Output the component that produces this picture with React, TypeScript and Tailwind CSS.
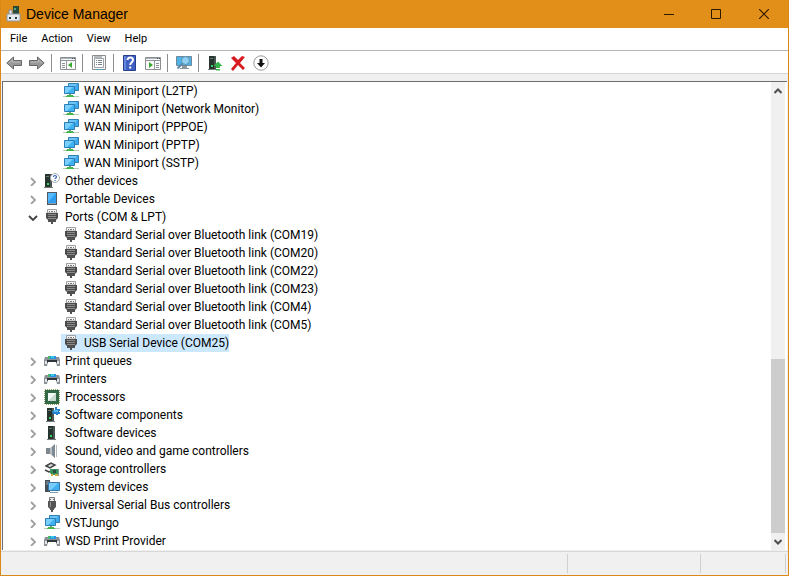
import React, { useState } from "react";

type IconName =
  | "network" | "unknown" | "portable" | "port" | "printer" | "cpu"
  | "component" | "software" | "sound" | "storage" | "system" | "usb";

interface Device {
  name: string;
  icon: IconName;
}

interface Category extends Device {
  open?: boolean;
  children?: Device[];
}

const adapters: Device[] = [
  { name: "WAN Miniport (L2TP)", icon: "network" },
  { name: "WAN Miniport (Network Monitor)", icon: "network" },
  { name: "WAN Miniport (PPPOE)", icon: "network" },
  { name: "WAN Miniport (PPTP)", icon: "network" },
  { name: "WAN Miniport (SSTP)", icon: "network" },
];

const categories: Category[] = [
  { name: "Other devices", icon: "unknown" },
  { name: "Portable Devices", icon: "portable" },
  {
    name: "Ports (COM & LPT)",
    icon: "port",
    open: true,
    children: [
      { name: "Standard Serial over Bluetooth link (COM19)", icon: "port" },
      { name: "Standard Serial over Bluetooth link (COM20)", icon: "port" },
      { name: "Standard Serial over Bluetooth link (COM22)", icon: "port" },
      { name: "Standard Serial over Bluetooth link (COM23)", icon: "port" },
      { name: "Standard Serial over Bluetooth link (COM4)", icon: "port" },
      { name: "Standard Serial over Bluetooth link (COM5)", icon: "port" },
      { name: "USB Serial Device (COM25)", icon: "port" },
    ],
  },
  { name: "Print queues", icon: "printer" },
  { name: "Printers", icon: "printer" },
  { name: "Processors", icon: "cpu" },
  { name: "Software components", icon: "component" },
  { name: "Software devices", icon: "software" },
  { name: "Sound, video and game controllers", icon: "sound" },
  { name: "Storage controllers", icon: "storage" },
  { name: "System devices", icon: "system" },
  { name: "Universal Serial Bus controllers", icon: "usb" },
  { name: "VSTJungo", icon: "network" },
  { name: "WSD Print Provider", icon: "printer" },
];

function Tower({ x = 0 }: { x?: number }) {
  return (
    <g transform={`translate(${x} 0)`}>
      <path d="M1 1h6v13H1z" fill="#26342f" />
      <path d="M6 1h2v13H6z" fill="#4b5652" />
      <path d="M2 3.500h3" stroke="#6b7a72" />
      <path d="M3 10h2v2H3z" fill="#37d565" />
      <path d="M0 14h9v1H0z" fill="#777" />
    </g>
  );
}

const drawings: Record<IconName, React.ReactNode> = {
  network: (
    <>
      <path d="M5.500.5h10v7h-10z" fill="#3fa9ea" stroke="#2f80b5" />
      <path d="M6 1h8l-2 3H6z" fill="#6cc6f8" />
      <path d="M1.500 3.500h10v7h-10z" fill="#3fb2f2" stroke="#2a7db5" />
      <path d="M2 4h8l-6 6H2z" fill="#7bcffc" />
      <path d="M0 13h16v1H0z" fill="#b9cdb9" />
      <path d="M6 11h2v1H6z" fill="#7d9c80" />
      <path d="M4 12h6v1H4zM3 13h8v1H3z" fill="#43b64b" />
    </>
  ),
  unknown: (
    <>
      <Tower />
      <circle cx="11" cy="5" r="4.500" fill="#fff" stroke="#a8adb5" />
      <path d="M9.500 4c0-2 3-2 3 0 0 1-1.500 1-1.500 2M11 7v1" fill="none" stroke="#315fb0" strokeWidth="1.200" />
    </>
  ),
  portable: (
    <>
      <path d="M3 1h10v13H3z" fill="#4d5a66" />
      <path d="M4 2h8v10H4z" fill="#2d9df0" />
      <path d="M4 2h8l-8 9z" fill="#58b9fb" />
      <path d="M4 12h8v1H4z" fill="#8ca0af" />
    </>
  ),
  port: (
    <>
      <path d="M3.500.5h9V4h-9z" fill="#f4f4f4" stroke="#a0a0a0" />
      <path d="M5 2h1v1H5zM7 2h2v1H7zM10 2h1v1h-1z" fill="#777" />
      <path d="M2 4h12v5l-2 2H4L2 9z" fill="#4b4b4b" />
      <path d="M4 5.500h8M4 7.500h8M4 9.500h8" stroke="#8a8a8a" />
      <path d="M4 11h3v2H4zM7 11h2v4H7zM9 11h3v2H9z" fill="#505050" />
    </>
  ),
  printer: (
    <>
      <path d="M4 3h8v4H4z" fill="#2f8fe0" />
      <path d="M4 3h2v3H4z" fill="#49b96a" />
      <path d="M7 3h3v2H7z" fill="#35cfe0" />
      <path d="M1 4h3v2h8V4h3l1 3v6H0V7z" fill="#8b9196" />
      <path d="M1 8h2v3H1zM13 8h2v3h-2z" fill="#e4e7e9" />
      <path d="M3 7h10v3H3z" fill="#30363b" />
      <path d="M4 9h8l1 4H3z" fill="#fff" />
    </>
  ),
  cpu: (
    <>
      <path d="M1 1h14v14H1z" fill="none" stroke="#8ba45a" strokeWidth="2" strokeDasharray="1 1" />
      <path d="M1 1h14v14H1z" fill="#326747" />
      <path d="M4 4h8v8H4z" fill="#c9dccf" />
      <path d="M4 4h8l-8 8z" fill="#f4faf6" />
    </>
  ),
  component: (
    <>
      <Tower x={2} />
      <path d="M9 3h2V0h2v2h3v2h-1v1h1v2h-2v1h-2V7H9V6H8V4h1z" fill="#2482cc" />
      <path d="M10 3h4v2h-4z" fill="#5db6ed" />
    </>
  ),
  software: <Tower x={3} />,
  sound: (
    <>
      <path d="M2 5h4v6H2z" fill="#7d878e" />
      <path d="M6 5l5-4v14l-5-4z" fill="#b6bec4" />
      <path d="M8 4l3-3v14l-3-3z" fill="#7e8a93" />
      <path d="M12.500 2v12" stroke="#b4bbc0" />
    </>
  ),
  storage: (
    <>
      <path d="M2 5l5-3 4 2-5 3zM1 9l4 2 3-1" fill="#ddd" stroke="#444" strokeWidth="1.500" />
      <path d="M6 8h9v6H8l-2-2z" fill="#35945b" />
      <path d="M9 9h3v3H9z" fill="#294c47" />
      <path d="M7 13h2v2H7zM11 13h3v2h-3z" fill="#d2ac3f" />
      <path d="M14 8h1v7h-1z" fill="#7d9aa1" />
    </>
  ),
  system: (
    <>
      <path d="M1 1h5v12H1z" fill="#434e57" />
      <path d="M2 3h3M2 5h3" stroke="#96a5ae" />
      <path d="M4.500 3.500h11v8h-11z" fill="#42b1f1" stroke="#3975a5" />
      <path d="M5 4h9l-7 7H5z" fill="#7ccdfc" />
      <path d="M6 13.500h8" stroke="#779eb5" />
    </>
  ),
  usb: (
    <>
      <path d="M5.500.5h5v4h-5z" fill="#eee" stroke="#777" />
      <path d="M6 2h1v1H6zM9 2h1v1H9z" fill="#666" />
      <path d="M4 4h8v6l-2 2v1H6v-1l-2-2z" fill="#555" />
      <path d="M6.500 5v5" stroke="#999" />
      <path d="M8 12v3" stroke="#555" strokeWidth="2" />
    </>
  ),
};

function DeviceIcon({ name }: { name: IconName }) {
  return (
    <svg className="h-4 w-4 shrink-0" viewBox="0 0 16 16" aria-hidden="true">
      {drawings[name]}
    </svg>
  );
}

function Arrow({ flip = false }: { flip?: boolean }) {
  return (
    <g transform={flip ? "translate(16 0) scale(-1 1)" : undefined}>
      <path d="M.8 8 7.500 2v3.500h8v5h-8V14z" fill="#999" stroke="#666" />
      <path d="M3 8l3.500-3v2h8" fill="none" stroke="#bbb" />
    </g>
  );
}

function WindowPane({ right = false }: { right?: boolean }) {
  return (
    <>
      <path d="M.5 2.500h15v12H.5z" fill="#fafafa" stroke="#8c8f92" />
      <path d="M1 3h14v1H1z" fill="#a8b0b7" />
      <path d="M1 5.500h14" stroke="#8c9298" />
      <path d="M12 3h1v1h-1zM14 3h1v1h-1z" fill="#4a5057" />
      {right ? (
        <>
          <path d="M9.500 6v8" stroke="#969a9e" />
          <path d="M4 7l4 3-4 3z" fill="#3ba832" />
          <path d="M11 8.500h3M11 10.500h3M11 12.500h3" stroke="#8b9197" />
        </>
      ) : (
        <>
          <path d="M6.500 6v8" stroke="#969a9e" />
          <path d="M12 7l-4 3 4 3z" fill="#3ba832" />
          <path d="M2 8.500h3M2 10.500h3M2 12.500h3" stroke="#8b9197" />
        </>
      )}
    </>
  );
}

function Tool({ label, children }: { label: string; children: React.ReactNode }) {
  return (
    <button type="button" aria-label={label} className="flex h-5 w-[23px] items-center justify-center hover:bg-[#e5f3ff]">
      <svg className="h-4 w-4" viewBox="0 0 16 16" aria-hidden="true">{children}</svg>
    </button>
  );
}

function Separator() {
  return <span className="mr-1 ml-[3px] h-[18px] w-px bg-[#8d8d8d]" />;
}

function Toolbar() {
  return (
    <div role="toolbar" aria-label="Device tools" className="flex h-[23px] items-center border-b border-[#d5d5d5] bg-white pt-0.5 pl-px">
      <Tool label="Back"><Arrow /></Tool>
      <Tool label="Forward"><Arrow flip /></Tool>
      <Separator />
      <Tool label="Show or hide console tree"><WindowPane /></Tool>
      <Separator />
      <Tool label="Properties">
        <path d="M1.500.5h13v14h-13z" fill="#f7f7f7" stroke="#8b8e91" />
        <path d="M3.500 3.500h9v9h-9z" fill="#fff" stroke="#a0a4a8" />
        <path d="M3 2h8M5 5.500h1M7 5.500h4M5 7.500h1M7 7.500h4M5 9.500h1M7 9.500h4" stroke="#777f87" />
        <path d="M5 14h3v1H5zM9 14h3v1H9z" fill="#46a6b7" />
      </Tool>
      <Separator />
      <Tool label="Help">
        <path d="M1.500.5h12v15h-12z" fill="#3f60c2" stroke="#283f8c" />
        <path d="M2 1h2v14H2z" fill="#6685dc" />
        <path d="M5.500 5c0-3.300 5.500-3.200 5.500 0C11 7.400 8.200 7.200 8.200 10M8.200 11.500v2" fill="none" stroke="#fff" strokeWidth="2" />
      </Tool>
      <Tool label="Show or hide action pane"><WindowPane right /></Tool>
      <Separator />
      <Tool label="Scan for hardware changes">
        <path d="M.5 1.500h15v9H.5z" fill="#50b3e7" stroke="#6f8796" />
        <path d="M6 11h5v2H6zM4 13h9v1H4z" fill="#8b999e" />
        <circle cx="9.500" cy="5.500" r="4" fill="#8fd0f2" stroke="#5a91b4" />
        <path d="M6.500 8.500 1.500 13.500" stroke="#5c89a9" strokeWidth="2" />
      </Tool>
      <Separator />
      <Tool label="Enable device">
        <Tower x={1} />
        <path d="M11 6.500 15.500 11H13v2H9v-2H6.500zM9 14h4v1.500H9z" fill="#35b64b" />
      </Tool>
      <Tool label="Uninstall device">
        <path d="M1 3l3-2 4 4 4-4 3 1-5 6 5 5-2 2-5-5-5 6-2-2 5-6z" fill="#d71920" />
      </Tool>
      <Tool label="Disable device">
        <circle cx="8" cy="8" r="7.200" fill="#fff" stroke="#9a9a9a" />
        <path d="M6.500 4h3v4H12l-4 4.500L4 8h2.500z" fill="#111" />
      </Tool>
    </div>
  );
}

function DeviceRow({ device, selected, onSelect }: { device: Device; selected: boolean; onSelect: () => void }) {
  return (
    <li role="treeitem" aria-selected={selected} className="flex h-[18px] pl-[58px]">
      <button
        type="button"
        onClick={onSelect}
        className={`flex h-[18px] items-center gap-[5px] pl-0.5 whitespace-nowrap ${selected ? "bg-[#cce8ff]" : ""}`}
      >
        <DeviceIcon name={device.icon} />
        {device.name}
      </button>
    </li>
  );
}

function Chevron({ open }: { open: boolean }) {
  return (
    <svg className="h-2.5 w-2.5" viewBox="0 0 10 10" fill="none" aria-hidden="true">
      {open ? (
        <path d="M1 4l4 4 4-4" stroke="#404040" strokeWidth="1.800" />
      ) : (
        <path d="M3 2 7 6 3 10" stroke="#a0a0a0" strokeWidth="1.800" />
      )}
    </svg>
  );
}

export default function App() {
  const [selected, setSelected] = useState("USB Serial Device (COM25)");
  const [opened, setOpened] = useState<string[]>(categories.filter((c) => c.open).map((c) => c.name));

  const toggle = (name: string) =>
    setOpened((list) => (list.includes(name) ? list.filter((n) => n !== name) : [...list, name]));

  return (
    <div className="flex min-h-screen flex-col border-x border-b border-[#d98a16] bg-[#f0f0f0] font-[Roboto,'Open_Sans',sans-serif] text-[12px] leading-[18px] text-black">
      <header className="flex h-7 items-center bg-[#e28f19] pl-[5px]">
        <svg className="h-4 w-4" viewBox="0 0 16 16" aria-hidden="true">
          <path d="M7 0h6v9H7z" fill="#284c3c" />
          <path d="M8 2h2v2H8z" fill="#62a57a" />
          <path d="M3 4h3v5H3z" fill="#eee" stroke="#7c8792" />
          <path d="M1 8h13v7H1z" fill="#e7ebee" stroke="#8d98a2" />
          <path d="M3 11h2v2H3zM9 11h2v2H9z" fill="#273746" />
        </svg>
        <h1 className="ml-1 flex-1 font-['Liberation_Sans',Arial,sans-serif] text-[14px]">Device Manager</h1>
        <button type="button" aria-label="Minimize" className="flex h-7 w-[47px] items-center justify-center">
          <svg className="h-2.5 w-2.5" viewBox="0 0 10 10" aria-hidden="true"><path d="M0 5.500h10" stroke="#2a1a02" /></svg>
        </button>
        <button type="button" aria-label="Maximize" className="flex h-7 w-12 items-center justify-center">
          <svg className="h-2.5 w-2.5" viewBox="0 0 10 10" aria-hidden="true"><path d="M.5.5h9v9h-9z" fill="none" stroke="#2a1a02" /></svg>
        </button>
        <button type="button" aria-label="Close" className="flex h-7 w-12 items-center justify-center">
          <svg className="h-2.5 w-2.5" viewBox="0 0 10 10" aria-hidden="true"><path d="M0 0l10 10M10 0 0 10" stroke="#2a1a02" strokeWidth="1.200" /></svg>
        </button>
      </header>

      <nav aria-label="Menu" className="flex h-[23px] items-center gap-3.5 border-b border-[#b4b4b4] bg-white pl-[9px] text-[11px]">
        <button type="button">File</button>
        <button type="button">Action</button>
        <button type="button">View</button>
        <button type="button">Help</button>
      </nav>

      <Toolbar />

      <main className="mx-px mt-[7px] flex flex-1 border-t border-l border-[#6d6d6d] bg-white">
        <ul role="tree" aria-label="Devices" className="min-w-0 flex-1 overflow-hidden">
          {adapters.map((d) => (
            <DeviceRow key={d.name} device={d} selected={selected === d.name} onSelect={() => setSelected(d.name)} />
          ))}
          {categories.map((c) => {
            const open = opened.includes(c.name);
            return (
              <li key={c.name} role="treeitem" aria-expanded={open} aria-selected={selected === c.name}>
                <div className="flex h-[18px] items-center pl-[25px]">
                  <button type="button" aria-label={`Toggle ${c.name}`} onClick={() => toggle(c.name)} className="mr-[5px] flex w-2.5 justify-center">
                    <Chevron open={open} />
                  </button>
                  <button
                    type="button"
                    onClick={() => setSelected(c.name)}
                    className={`flex h-[18px] items-center gap-[5px] pl-px whitespace-nowrap ${selected === c.name ? "bg-[#cce8ff]" : ""}`}
                  >
                    <DeviceIcon name={c.icon} />
                    {c.name}
                  </button>
                </div>
                {open && c.children && (
                  <ul role="group">
                    {c.children.map((d) => (
                      <DeviceRow key={d.name} device={d} selected={selected === d.name} onSelect={() => setSelected(d.name)} />
                    ))}
                  </ul>
                )}
              </li>
            );
          })}
        </ul>
        <div className="mr-0.5 flex w-3.5 flex-col bg-[#f0f0f0]">
          <button type="button" aria-label="Scroll up" className="flex h-[17px] items-center justify-center">
            <svg className="h-2 w-2" viewBox="0 0 8 8" aria-hidden="true"><path d="M.5 6 4 2.500 7.500 6" fill="none" stroke="#505050" strokeWidth="2" /></svg>
          </button>
          <div className="flex flex-1 flex-col">
            <div className="grow-[261]" />
            <div className="grow-[174] bg-[#cdcdcd]" />
          </div>
          <button type="button" aria-label="Scroll down" className="flex h-[17px] items-center justify-center">
            <svg className="h-2 w-2" viewBox="0 0 8 8" aria-hidden="true"><path d="M.5 2 4 5.500 7.500 2" fill="none" stroke="#505050" strokeWidth="2" /></svg>
          </button>
        </div>
      </main>

      <footer className="mt-px flex h-6 border-t border-[#d7d7d7] py-0.5">
        <div className="flex-1 border-r border-[#d0d0d0]" />
        <div className="w-[133px] border-r border-[#d0d0d0]" />
        <div className="mr-0.5 w-[85px] border-r border-[#d0d0d0]" />
      </footer>
    </div>
  );
}
